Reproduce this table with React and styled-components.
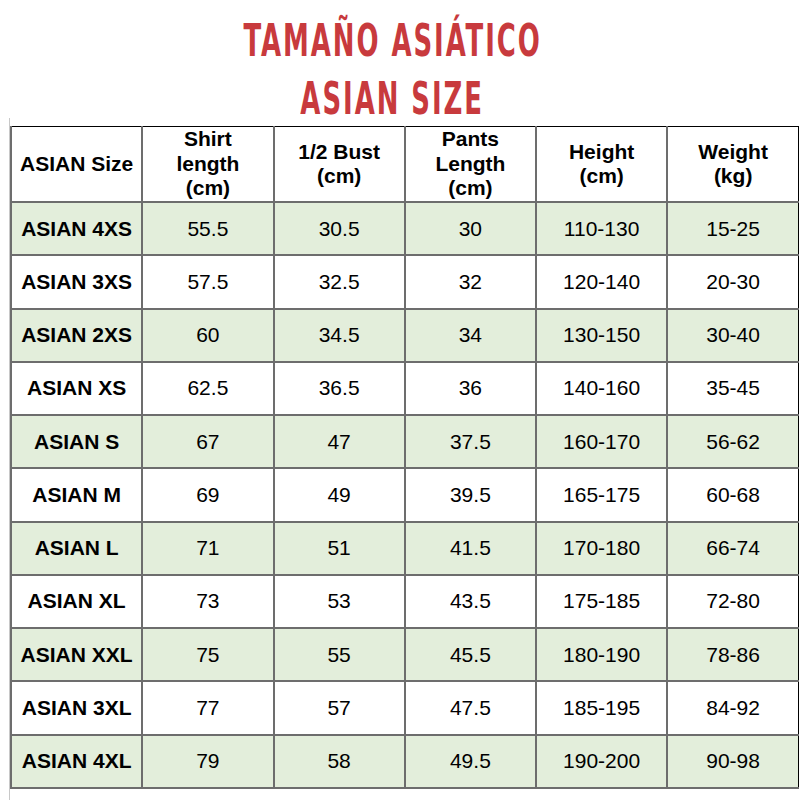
import React from 'react';
import styled, { createGlobalStyle } from 'styled-components';

const GlobalStyle = createGlobalStyle`
  html, body {
    margin: 0;
    padding: 0;
    background: #ffffff;
  }
  body {
    font-family: "Liberation Sans", Arial, sans-serif;
    color: #000;
  }
`;

const Page = styled.div`
  width: 800px;
  height: 800px;
  overflow: hidden;
  display: flex;
  flex-direction: column;
`;

const Title = styled.h1`
  margin: 0;
  padding-top: 12px;
  height: 106px;
  display: flex;
  flex-direction: column;
  align-items: center;
  font-family: "DejaVu Sans Condensed", "DejaVu Sans", sans-serif;
  font-weight: bold;
  font-size: 44px;
  line-height: 58px;
  color: #c83a3d;
  letter-spacing: 3px;
`;

const TitleLine = styled.span`
  display: inline-block;
  transform: scaleX(${(p) => p.$squeeze});
  margin-left: ${(p) => p.$shift}px;
`;

const Frame = styled.div`
  margin-left: 9px;
  border-left: 1px solid #c8c8c8;
  flex: 1;
  padding-top: 8px;
`;

const Table = styled.table`
  width: 789px;
  table-layout: fixed;
  border-collapse: collapse;
  border-top: 1px solid #000;
  border-right: 1px solid #000;
  border-left: 2px solid #6d6d6d;
  font-size: 21px;
`;

const HeadCell = styled.th`
  height: 74px;
  padding: 0;
  font-weight: bold;
  line-height: 24.5px;
  text-align: center;
  vertical-align: middle;
  border: 2px solid #6d6d6d;
  border-top: none;
  &:first-child {
    border-right: 1px solid #000;
  }
  &:last-child {
    border-right: 1px solid #000;
  }
`;

const Row = styled.tr`
  background: ${(p) => (p.$shaded ? '#e3eedb' : '#ffffff')};
`;

const Cell = styled.td`
  height: 51.25px;
  padding: 0;
  text-align: center;
  vertical-align: middle;
  font-weight: ${(p) => (p.$bold ? 'bold' : 'normal')};
  border: 2px solid #6d6d6d;
  &:first-child {
    border-right: 1px solid #000;
  }
  &:last-child {
    border-right: 1px solid #000;
  }
`;

const headers = [
  ['ASIAN Size'],
  ['Shirt', 'length', '(cm)'],
  ['1/2 Bust', '(cm)'],
  ['Pants', 'Length', '(cm)'],
  ['Height', '(cm)'],
  ['Weight', '(kg)'],
];

const rows = [
  ['ASIAN 4XS', '55.5', '30.5', '30', '110-130', '15-25'],
  ['ASIAN 3XS', '57.5', '32.5', '32', '120-140', '20-30'],
  ['ASIAN 2XS', '60', '34.5', '34', '130-150', '30-40'],
  ['ASIAN XS', '62.5', '36.5', '36', '140-160', '35-45'],
  ['ASIAN S', '67', '47', '37.5', '160-170', '56-62'],
  ['ASIAN M', '69', '49', '39.5', '165-175', '60-68'],
  ['ASIAN L', '71', '51', '41.5', '170-180', '66-74'],
  ['ASIAN XL', '73', '53', '43.5', '175-185', '72-80'],
  ['ASIAN XXL', '75', '55', '45.5', '180-190', '78-86'],
  ['ASIAN 3XL', '77', '57', '47.5', '185-195', '84-92'],
  ['ASIAN 4XL', '79', '58', '49.5', '190-200', '90-98'],
];

export default function App() {
  return (
    <Page>
      <GlobalStyle />
      <Title>
        <TitleLine $squeeze={0.655} $shift={-14}>TAMAÑO ASIÁTICO</TitleLine>
        <TitleLine $squeeze={0.655} $shift={-16}>ASIAN SIZE</TitleLine>
      </Title>
      <Frame>
        <Table>
          <thead>
            <tr>
              {headers.map((lines, i) => (
                <HeadCell key={i}>
                  {lines.map((l, j) => (
                    <React.Fragment key={j}>
                      {j > 0 && <br />}
                      {l}
                    </React.Fragment>
                  ))}
                </HeadCell>
              ))}
            </tr>
          </thead>
          <tbody>
            {rows.map((r, i) => (
              <Row key={r[0]} $shaded={i % 2 === 0}>
                {r.map((v, j) => (
                  <Cell key={j} $bold={j === 0}>
                    {v}
                  </Cell>
                ))}
              </Row>
            ))}
          </tbody>
        </Table>
      </Frame>
    </Page>
  );
}
